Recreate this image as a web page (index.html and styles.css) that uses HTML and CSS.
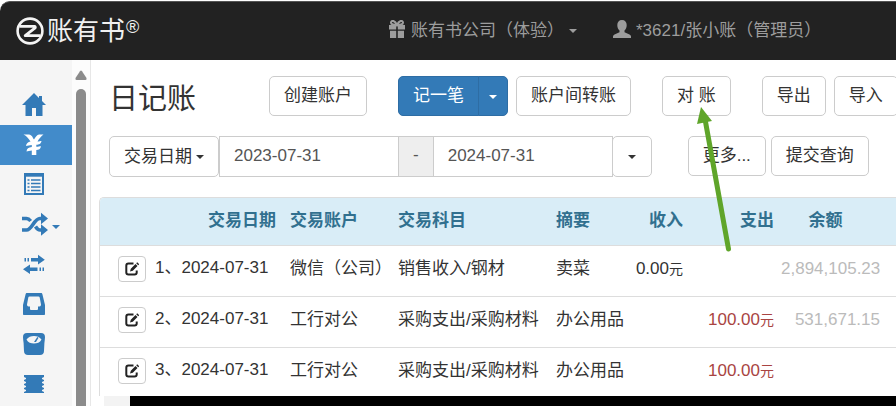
FILE: index.html
```html
<!DOCTYPE html>
<html lang="zh-CN">
<head>
  <meta charset="UTF-8">
  <meta name="viewport" content="width=device-width, initial-scale=1.0">
  <title>日记账 - 账有书</title>
  <link rel="stylesheet" href="styles.css">
</head>
<body>
  <header class="navbar">
    <a class="brand" href="#">
      <svg class="brand-logo" viewBox="0 0 28 28" fill="none" stroke="#f4f4f4">
        <circle cx="14" cy="14" r="12.4" stroke-width="2.6"/>
        <path d="M3.500 9.300H18.500Q20 10 18.800 11.200L9.200 18.700H24.500" stroke-width="2.800" stroke-linejoin="round"/>
      </svg>
      <span class="brand-name">账有书</span><span class="brand-mark">®</span>
    </a>
    <nav class="nav-links">
      <a class="nav-link" href="#">
        <svg class="nav-icon" viewBox="0 0 18 18" fill="currentColor">
          <path d="M1 5h7.200v4.500H1zM9.800 5H17v4.500H9.800zM2 10.800h6.200V18H2zM9.800 10.800H16V18H9.800z"/>
          <path d="M9 5C7 .5 3.500-.2 3 2.400 2.700 4.500 6 5 9 5c3 0 6.300-.5 6-2.600C14.500-.2 11 .5 9 5z" fill="none" stroke="currentColor" stroke-width="2"/>
        </svg>
        <span>账有书公司（体验）</span>
        <span class="caret"></span>
      </a>
      <a class="nav-link" href="#">
        <svg class="nav-icon" viewBox="0 0 18 18" fill="currentColor">
          <path d="M9 0c3 0 4.700 2 4.700 5 0 2.300-.8 4.300-2.200 5.500v1.700l5 2.200c1 .5 1.500 1.200 1.500 2.200V18H0v-1.400c0-1 .5-1.700 1.500-2.200l5-2.200v-1.700C5.100 9.300 4.300 7.300 4.300 5 4.300 2 6 0 9 0z"/>
        </svg>
        <span>*3621/张小账（管理员）</span>
      </a>
    </nav>
  </header>

  <div class="workspace">
    <nav class="sidebar">
      <a class="side-item" href="#" aria-label="首页">
        <svg viewBox="0 0 24 24" fill="currentColor"><path d="M12 1l5 5V4h3v5l4 4h-3.500v11H14v-8h-4v8H3.500V13H0z"/></svg>
      </a>
      <a class="side-item active" href="#" aria-label="日记账">
        <svg viewBox="0 0 24 24" fill="currentColor">
          <path d="M1.500 2.500H7c3 .3 3.500 3 5 5 1.500-2.500 3-4.700 5-5h4.500c-2 1.500-4.300 4-6 7 1.500 0 3-.5 4-.5-.5 3-2.500 3.700-5.200 3.800v2c1.700 0 3.500-.5 4.700-.5-.5 3-2 3.700-4.700 3.800V23H9.800v-4.500c-2 .2-4 .8-5.300 1 .3-2.800 2-4.200 5.300-4.400v-2c-2 .2-4.300.8-5.800 1C4.300 11.500 6 10 8.500 9.600 6 6 4 3.500 1.500 2.500z"/>
        </svg>
      </a>
      <a class="side-item" href="#" aria-label="明细">
        <svg viewBox="0 0 24 24" fill="none" stroke="currentColor">
          <path d="M3 2h18v20H3z" stroke-width="2"/>
          <path d="M2 3h20" stroke-width="3.400"/>
          <path d="M5.500 8h2M5.500 11.500h2M5.500 15h2M5.500 18.500h2M9 8h9.500M9 11.500h9.500M9 15h9.500M9 18.500h9.500" stroke-width="1.600"/>
        </svg>
      </a>
      <a class="side-item" href="#" aria-label="往来">
        <svg class="wide" viewBox="0 0 26 24" fill="none" stroke="currentColor" stroke-width="3.600">
          <path d="M0 6.500h4.500c2 0 3 1 4.200 2.500M0 18h4.500C10 18 12 6.500 18 6.500h3M13.500 14.500c1.500 2.300 2.500 3.500 4.500 3.500h3"/>
          <path d="M19 .800l7 5.700-7 5.700zM19 12.300l7 5.700-7 5.700z" fill="currentColor" stroke="none"/>
        </svg>
        <span class="caret"></span>
      </a>
      <a class="side-item" href="#" aria-label="转账">
        <svg viewBox="0 0 24 24" fill="currentColor">
          <path d="M2.500 6H4v3.500H2.500zM5.500 6H7v3.500H5.500zM9 6h7V2.800l6.800 4.900L16 12.500v-3H9zM20.500 15.500H22V19h-1.500zM17.500 15.500H19V19h-1.500zM15.500 15.500V19H8v3l-7-4.800 7-4.700v3z"/>
        </svg>
      </a>
      <a class="side-item" href="#" aria-label="收件箱">
        <svg viewBox="0 0 24 24" fill="currentColor" fill-rule="evenodd">
          <path d="M5 1h14c.8 0 1.200.4 1.400 1.200L23 13v9c0 .8-.4 1-1 1H2c-.6 0-1-.3-1-1v-9L3.600 2.200C3.800 1.400 4.200 1 5 1zM7.500 4.500Q6.500 4.500 6.300 5.500L5 12.500Q5 14.500 6.500 14.500H8v2.500Q8 18 9 18h6q1 0 1-1v-2.500h1.500Q19 14.500 19 12.500L17.700 5.500Q17.500 4.500 16.500 4.500z"/>
        </svg>
      </a>
      <a class="side-item" href="#" aria-label="资产">
        <svg viewBox="0 0 24 24" fill="currentColor" fill-rule="evenodd">
          <path d="M5 1h14c2.700 0 4 1.500 4 4 0 2-.4 4-.6 6l-.4 8c0 2.500-1.500 4-4 4H6c-2.500 0-4-1.500-4-4l-.4-8C1.400 9 1 7 1 5c0-2.500 1.300-4 4-4zM12 4C9 4 6.300 5 4.500 7.500 6 10.500 9 11.500 12 11.500s6-1 7.500-4C17.700 5 15 4 12 4z"/>
          <path d="M12 10l3.300-5 1.200.7L14 10z"/>
        </svg>
      </a>
      <a class="side-item" href="#" aria-label="账本">
        <svg viewBox="0 0 24 24" fill="currentColor"><path d="M2 3h20v2l-2 1v1l2 1v1l-2 1v1l2 1v1l-2 1v1l2 1v1l-2 1v1l2 1v1H2v-1l2-1v-1l-2-1v-1l2-1v-1l-2-1v-1l2-1v-1L2 9V8l2-1V6L2 5z"/></svg>
      </a>
    </nav>

    <div class="scrollbar">
      <svg viewBox="0 0 12 10" fill="#8b8b8b"><path d="M5 1.200Q6 0 7 1.200L11.500 8Q12 10 10.500 10h-9Q0 10 .5 8z"/></svg>
      <div class="thumb"></div>
    </div>

    <main class="main">
      <div class="content">
        <div class="toolbar">
          <h1>日记账</h1>
          <button class="btn">创建账户</button>
          <div class="btn-set">
            <div class="btn-group">
              <button class="btn primary">记一笔</button>
              <button class="btn primary toggle" aria-label="更多记账方式"><span class="caret"></span></button>
            </div>
            <button class="btn">账户间转账</button>
          </div>
          <button class="btn">对 账</button>
          <div class="btn-set">
            <button class="btn">导出</button>
            <button class="btn">导入</button>
          </div>
        </div>

        <form class="filters">
          <div class="btn-group date-range">
            <button type="button" class="btn">交易日期<span class="caret"></span></button>
            <input class="date-input" type="text" value="2023-07-31" aria-label="开始日期">
            <span class="addon">-</span>
            <input class="date-input" type="text" value="2024-07-31" aria-label="结束日期">
            <button type="button" class="btn" aria-label="选择期间"><span class="caret"></span></button>
          </div>
          <div class="query">
            <button type="button" class="btn">更多...</button>
            <button type="button" class="btn">提交查询</button>
          </div>
        </form>

        <div class="panel">
          <table class="journal">
            <colgroup>
              <col class="col-date"><col class="col-account"><col class="col-subject"><col class="col-summary">
              <col class="col-income"><col class="col-expense"><col class="col-balance"><col>
            </colgroup>
            <thead>
              <tr>
                <th class="right">交易日期</th>
                <th>交易账户</th>
                <th>交易科目</th>
                <th>摘要</th>
                <th class="right">收入</th>
                <th class="right">支出</th>
                <th class="center">余额</th>
                <th></th>
              </tr>
            </thead>
            <tbody>
              <tr>
                <td><div class="entry"><button class="btn-edit" aria-label="编辑"><svg viewBox="0 0 14 14"><use href="#edit"/></svg></button><span>1、2024-07-31</span></div></td>
                <td>微信（公司）</td>
                <td>销售收入/钢材</td>
                <td>卖菜</td>
                <td class="right">0.00<small>元</small></td>
                <td></td>
                <td class="right balance">2,894,105.23</td>
                <td></td>
              </tr>
              <tr>
                <td><div class="entry"><button class="btn-edit" aria-label="编辑"><svg viewBox="0 0 14 14"><use href="#edit"/></svg></button><span>2、2024-07-31</span></div></td>
                <td>工行对公</td>
                <td>采购支出/采购材料</td>
                <td>办公用品</td>
                <td></td>
                <td class="right expense">100.00<small>元</small></td>
                <td class="right balance">531,671.15</td>
                <td></td>
              </tr>
              <tr>
                <td><div class="entry"><button class="btn-edit" aria-label="编辑"><svg viewBox="0 0 14 14"><use href="#edit"/></svg></button><span>3、2024-07-31</span></div></td>
                <td>工行对公</td>
                <td>采购支出/采购材料</td>
                <td>办公用品</td>
                <td></td>
                <td class="right expense">100.00<small>元</small></td>
                <td></td>
                <td></td>
              </tr>
            </tbody>
          </table>
        </div>

        <!-- pointer to the reconcile button -->
        <svg class="pointer" viewBox="0 0 36 146">
          <path d="M8 12L31.500 142" stroke="#5fa52a" stroke-width="5" stroke-linecap="round"/>
          <path d="M4 0L15 14L0 17z" fill="#5fa52a"/>
        </svg>
      </div>
      <div class="bottom-bar"></div>
    </main>
  </div>

  <svg class="symbols">
    <symbol id="edit" viewBox="0 0 14 14">
      <path d="M8.500 1.500H3.500Q1.300 1.500 1.300 3.700V10.500Q1.300 12.500 3.500 12.500H9.500Q11.700 12.500 11.700 10.500V8.500" fill="none" stroke="#222" stroke-width="2"/>
      <path d="M5 9.500l.8-2.800L10.500 2l2 2L7.800 8.700zM11.200 1.300l1-1 2 2-1 1z" fill="#222"/>
    </symbol>
  </svg>
</body>
</html>
```
FILE: styles.css
```css
* {
  box-sizing: border-box;
}
body {
  margin: 0;
  height: 100vh;
  display: flex;
  flex-direction: column;
  overflow: hidden;
  background: #fff;
  color: #333;
  font-family: "Liberation Sans", "Noto Sans CJK SC", sans-serif;
  font-size: 17px;
  line-height: 24px;
}
a {
  color: inherit;
  text-decoration: none;
}
.caret {
  display: inline-block;
  border-top: 4px solid;
  border-left: 4px solid transparent;
  border-right: 4px solid transparent;
}
.symbols {
  display: none;
}

/* top bar */
.navbar {
  flex: none;
  display: flex;
  align-items: center;
  height: 59px;
  margin-top: 1px;
  padding-left: 16px;
  background: #222;
  border-top: 1px solid #555;
  border-top-left-radius: 10px;
  color: #9d9d9d;
  white-space: nowrap;
}
.brand {
  display: flex;
  align-items: center;
  width: 372px;
  color: #f0f0f0;
}
.brand-logo {
  width: 28px;
  height: 28px;
  margin-right: 3px;
}
.brand-name {
  font-size: 26px;
}
.brand-mark {
  margin: 0 0 8px 1px;
  font-size: 18px;
}
.nav-links {
  display: flex;
  gap: 36px;
}
.nav-link {
  display: flex;
  align-items: center;
  gap: 5px;
}
.nav-icon {
  width: 18px;
  height: 18px;
  margin-bottom: 4px;
}

/* left menu */
.workspace {
  flex: 1;
  display: flex;
  min-height: 0;
}
.sidebar {
  flex: none;
  width: 72px;
  padding-top: 25px;
  background: #f5f5f5;
  color: #337ab7;
  overflow: hidden;
}
.side-item {
  display: flex;
  align-items: center;
  gap: 4px;
  height: 40px;
  padding: 0 0 2px 22px;
}
.side-item svg {
  width: 24px;
  height: 24px;
}
.side-item .wide {
  width: 26px;
}
.side-item .caret {
  margin-top: 6px;
}
.side-item.active {
  background: #428bca;
  color: #fff;
}
.scrollbar {
  flex: none;
  display: flex;
  flex-direction: column;
  align-items: center;
  gap: 9px;
  width: 19px;
  padding-top: 10px;
  background: #fcfcfc;
  border-right: 1px solid #e7e7e7;
}
.scrollbar svg {
  width: 12px;
  height: 10px;
}
.thumb {
  flex: 1;
  width: 10px;
  background: #8b8b8b;
  border-radius: 5px 5px 0 0;
}

/* page */
.main {
  flex: 1;
  display: flex;
  flex-direction: column;
  min-width: 0;
}
.content {
  position: relative;
  flex: 1;
  min-height: 0;
  padding: 16px 0 0 8px;
  overflow: hidden;
}
.toolbar,
.filters {
  display: flex;
  align-items: flex-start;
  margin: 0 0 20px 10px;
  white-space: nowrap;
}
.toolbar {
  gap: 31px;
}
.filters {
  gap: 36px;
}
h1 {
  flex: none;
  width: 129px;
  margin: 0;
  font-size: 29px;
  font-weight: 400;
  line-height: 46px;
  height: 40px;
}
.btn-set {
  display: flex;
  gap: 8px;
}
.query {
  display: flex;
  gap: 5px;
}
.btn-group {
  display: flex;
}
.btn {
  flex: none;
  height: 40px;
  padding: 0 14px;
  background: #fff;
  border: 1px solid #ccc;
  border-radius: 5px;
  color: #333;
  font: inherit;
  cursor: pointer;
}
.btn:hover {
  background: #e6e6e6;
}
.btn .caret {
  vertical-align: middle;
}
.btn.primary {
  background: #337ab7;
  border-color: #2e6da4;
  color: #fff;
}
.btn-group .btn:first-child {
  border-top-right-radius: 0;
  border-bottom-right-radius: 0;
}
.btn-group .btn:last-child {
  border-top-left-radius: 0;
  border-bottom-left-radius: 0;
}
.btn.toggle {
  margin-left: -1px;
  padding: 0 10px;
}
.date-range {
  height: 41px;
}
.date-range .btn {
  height: 41px;
}
.date-range .btn:first-child {
  border-radius: 5px;
}
.date-range .btn:first-child .caret {
  margin-left: 4px;
}
.date-range .btn:last-child {
  width: 40px;
  margin-left: -1px;
  border-radius: 5px;
}
.date-input {
  width: 180px;
  height: 41px;
  padding: 0 14px 2px;
  border: 1px solid #ccc;
  color: #555;
  font: inherit;
}
.addon {
  padding: 6px 14px;
  background: #eee;
  border: 1px solid #ccc;
  border-width: 1px 0;
  color: #555;
}

/* journal table */
.panel {
  border: 1px solid #ddd;
  border-right: 0;
  border-top-left-radius: 5px;
  overflow: hidden;
}
.journal {
  width: 100%;
  table-layout: fixed;
  border-collapse: collapse;
  white-space: nowrap;
}
.col-date { width: 183px; }
.col-account { width: 108px; }
.col-subject { width: 158px; }
.col-summary { width: 79px; }
.col-income { width: 62px; }
.col-expense { width: 91px; }
.col-balance { width: 106px; }
.journal th {
  height: 47px;
  padding: 0 7px;
  background: #d9edf7;
  color: #31708f;
  text-align: left;
}
.journal td {
  height: 51px;
  padding: 0 7px 4px;
  border-top: 1px solid #ddd;
}
.journal .right {
  text-align: right;
}
.journal .center {
  padding-right: 24px;
  text-align: center;
}
.journal small {
  font-size: 14px;
}
.journal .expense {
  color: #a94442;
}
.journal .balance {
  padding-left: 0;
  color: #bbb;
}
.entry {
  display: flex;
  gap: 9px;
  padding-left: 11px;
}
.btn-edit {
  display: flex;
  align-items: center;
  justify-content: center;
  width: 28px;
  height: 26px;
  padding: 0;
  background: #fff;
  border: 1px solid #ccc;
  border-radius: 4px;
}
.btn-edit svg {
  width: 14px;
  height: 14px;
}
.pointer {
  position: absolute;
  top: 47px;
  left: 606px;
  width: 36px;
  height: 146px;
  pointer-events: none;
}
.bottom-bar {
  flex: none;
  height: 10px;
  margin-left: 13px;
  background: #000;
  border-left: 26px solid #f3f3f3;
}
```
